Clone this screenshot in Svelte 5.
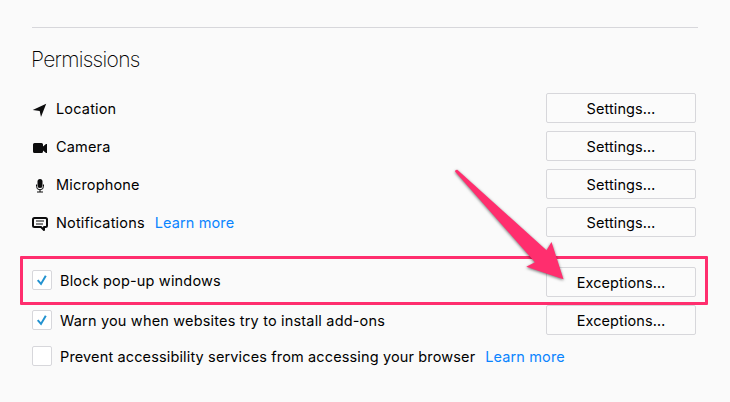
<script>
  const permissions = [
    { name: 'Location', icon: 'location' },
    { name: 'Camera', icon: 'camera' },
    { name: 'Microphone', icon: 'microphone' },
    { name: 'Notifications', icon: 'notifications', more: true }
  ];
  const options = [
    { label: 'Block pop-up windows', cls: 'block', checked: true, button: true },
    { label: 'Warn you when websites try to install add-ons', cls: 'warn', checked: true, button: true },
    { label: 'Prevent accessibility services from accessing your browser', cls: 'prevent', checked: false, more: true }
  ];
</script>

<main>
  <hr />
  <h1>Permissions</h1>
  <section class="permissions">
    {#each permissions as item}
      <div class="row">
        <svg class="icon" width="16" height="16" viewBox="0 0 16 16" fill="#0c0c0d">
          {#if item.icon === 'location'}
            <path d="M14.200 1.700 9 15 7.700 8.900 .7 7.900z" />
          {:else if item.icon === 'camera'}
            <path d="M2.500 3h7q1.500 0 1.500 1.500V6.500l3-2.500h1v9h-1l-3-2.500v1q0 1.500-1.500 1.500h-7Q1 13 1 11.500v-7Q1 3 2.500 3z" />
          {:else if item.icon === 'microphone'}
            <rect x="5.500" y="1" width="5" height="9" rx="2.500" />
            <path d="M4.500 6.500v1.800a3.500 3.500 0 0 0 7 0V6.500M8 12v2M5 14h6" fill="none" stroke="#0c0c0d" stroke-width="1" />
          {:else}
            <path d="M2.500 2h11Q15 2 15 3.500v6Q15 11 13.500 11H12v3l-3-3H2.500Q1 11 1 9.500v-6Q1 2 2.500 2z" fill="none" stroke="#0c0c0d" stroke-width="2" stroke-linejoin="round" />
            <path d="M4 4.500h8v1H4zm0 3h7v1H4z" />
          {/if}
        </svg>
        <span class="name">{item.name}</span>
        {#if item.more}<a href="#more">Learn more</a>{/if}
        <button>Settings…</button>
      </div>
    {/each}
  </section>
  <section class="options">
    {#each options as item}
      <div class="option {item.cls}">
        <span class="box">
          {#if item.checked}
            <svg width="18" height="18" viewBox="0 0 18 18"><path d="M4.700 9.200 8 12.900 12.800 4.800" fill="none" stroke="#2292d0" stroke-width="2" /></svg>
          {/if}
        </span>
        <span class="label">{item.label}</span>
        {#if item.more}<a href="#more">Learn more</a>{/if}
        {#if item.button}<button>Exceptions…</button>{/if}
      </div>
    {/each}
  </section>
  <div class="highlight"></div>
  <svg class="arrow" width="130" height="130" viewBox="445 160 130 130">
    <path d="M455 171.500Q455 169.500 457.300 169.700L546.500 250.300 551.500 242 563.500 279.300 526.300 266.700 535 262.300Z" fill="#ff2e6e" />
  </svg>
</main>

<style>
  :global(body) { margin: 0; background: #fafafa; }
  main {
    position: relative;
    box-sizing: border-box;
    width: 730px;
    height: 402px;
    padding: 27px 32px 0;
    overflow: hidden;
    background: #fafafa;
    color: #000;
    font: 14.5px/20px Inter, "Liberation Sans", sans-serif;
    letter-spacing: .17px;
  }
  hr { height: 1px; margin: 0; border: 0; background: #d7d7db; }
  h1 { margin: 17px 0 0 -1px; font-size: 21px; line-height: 30px; font-weight: 200; letter-spacing: -.7px; }
  .permissions { display: flex; flex-direction: column; gap: 8px; margin-top: 18px; }
  .row { display: flex; align-items: center; height: 30px; padding-right: 2px; }
  .row span, .row a { padding-top: 2px; }
  .icon { flex: none; margin: 4px 8px 0 0; }
  span, a { white-space: nowrap; }
  a { margin-left: 10px; color: #0a84ff; text-decoration: none; letter-spacing: .12px; }
  button {
    box-sizing: border-box;
    width: 150px;
    height: 30px;
    margin: 0 0 0 auto;
    padding: 2px 0 0;
    border: 1px solid #d7d7db;
    border-radius: 2px;
    background: #fbfbfb;
    color: #000;
    font: inherit;
    letter-spacing: .1px;
  }
  .options { margin-top: 30px; }
  .option { display: flex; align-items: flex-start; height: 38px; padding-right: 2px; }
  .box {
    box-sizing: border-box;
    flex: none;
    width: 20px;
    height: 20px;
    margin: 3px 8px 0 0;
    border: 1px solid #d7d7db;
    border-radius: 2px;
    background: #fff;
  }
  .box svg { display: block; }
  .label, .option a { margin-top: 4px; }
  .warn .box { margin-top: 5px; }
  .warn .label { margin-top: 6px; letter-spacing: .18px; }
  .prevent .label { letter-spacing: .14px; }
  .highlight {
    position: absolute;
    left: 20px;
    top: 256px;
    box-sizing: border-box;
    width: 688px;
    height: 49px;
    border: 3px solid #ff2e6e;
    border-radius: 1px;
  }
  .arrow { position: absolute; left: 445px; top: 160px; filter: drop-shadow(0 1px 1.5px rgba(0, 0, 0, .55)); }
</style>
